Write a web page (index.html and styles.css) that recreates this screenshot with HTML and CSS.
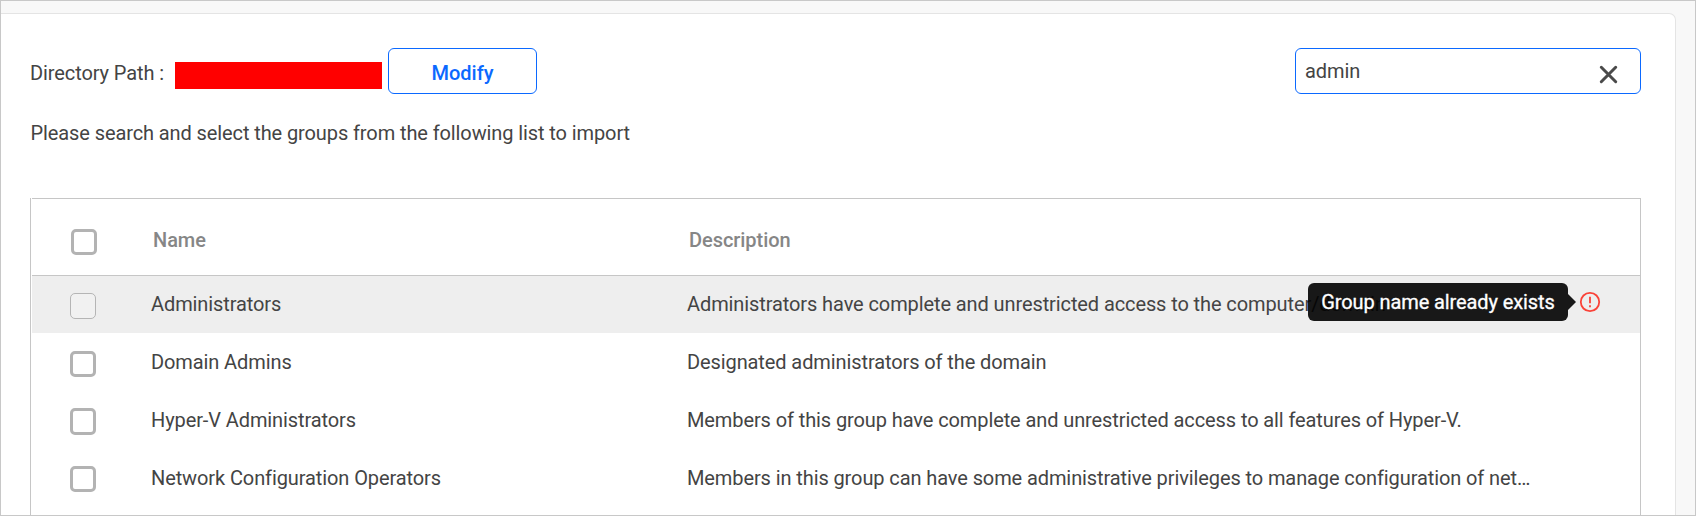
FILE: index.html
```html
<!DOCTYPE html>
<html lang="en">
<head>
<meta charset="utf-8">
<title>Import Groups</title>
<link rel="stylesheet" href="styles.css">
</head>
<body>
<main class="frame">
  <section class="panel">
    <div class="toolbar">
      <span class="path-label">Directory Path :</span>
      <span class="path-value"></span>
      <button class="modify" type="button">Modify</button>
      <div class="search">
        <span class="search-text">admin</span>
        <svg class="clear" width="19" height="19" viewBox="0 0 19 19"><path d="M2.3 2.3 16.7 16.7M16.7 2.3 2.3 16.7"/></svg>
      </div>
    </div>
    <p class="hint">Please search and select the groups from the following list to import</p>
    <div class="table">
      <div class="row head">
        <span class="box"></span><span class="name">Name</span><span class="desc">Description</span>
      </div>
      <div class="row disabled">
        <span class="box"></span><span class="name">Administrators</span><span class="desc">Administrators have complete and unrestricted access to the computer/domain</span>
        <div class="warn">
          <svg width="22" height="22" viewBox="0 0 22 22"><circle cx="11" cy="11" r="9.2"/><path d="M11 5.7V12.2M11 14.3V16.3"/></svg>
          <span class="tooltip">Group name already exists</span>
        </div>
      </div>
      <div class="row">
        <span class="box"></span><span class="name">Domain Admins</span><span class="desc">Designated administrators of the domain</span>
      </div>
      <div class="row low">
        <span class="box tall"></span><span class="name">Hyper-V Administrators</span><span class="desc">Members of this group have complete and unrestricted access to all features of Hyper-V.</span>
      </div>
      <div class="row low">
        <span class="box"></span><span class="name">Network Configuration Operators</span><span class="desc">Members in this group can have some administrative privileges to manage configuration of net…</span>
      </div>
    </div>
  </section>
</main>
</body>
</html>
```
FILE: styles.css
```css
* { box-sizing: border-box; }
body {
  margin: 0;
  font-family: Roboto, "Liberation Sans", sans-serif;
  font-size: 20px;
  line-height: 24px;
  letter-spacing: -.1px;
  color: #444;
}
.frame {
  height: 516px;
  border: 1px solid #c8c8c8;
  background: #f8f8f8;
  padding: 12px 19px 0 0;
  overflow: hidden;
}
.panel {
  height: 520px;
  background: #fff;
  border: 1px solid #e4e4e4;
  border-left: 0;
  border-radius: 0 7px 0 0;
  padding: 34px 34px 0 29px;
}
.toolbar { display: flex; height: 47px; }
.path-label { width: 145px; padding-top: 13px; white-space: nowrap; }
.path-value { width: 207px; height: 27px; margin-top: 14px; background: #f00; }
.modify {
  width: 149px;
  height: 46px;
  margin-left: 6px;
  padding: 4px 0 0;
  border: 1px solid #0b69ff;
  border-radius: 6px;
  background: #fff;
  color: #0b69ff;
  font: 500 20px/24px Roboto, sans-serif;
}
.search {
  display: flex;
  justify-content: space-between;
  width: 346px;
  height: 46px;
  margin-left: auto;
  padding: 10px 22px 0 9px;
  border: 1px solid #0b69ff;
  border-radius: 6px;
}
.clear { margin-top: 6px; fill: none; stroke: #4a4a4a; stroke-width: 3; stroke-linecap: round; }
.hint { margin: 26px 0 53px; padding-left: .5px; }
.table {
  height: 330px;
  border: solid #c6c6c6;
  border-width: 0 1px;
  padding-left: 1px;
}
.row { display: flex; height: 58px; padding: 18px 0 0 38px; position: relative; white-space: nowrap; }
.head { height: 78px; padding: 30px 0 0 39px; border: solid #c6c6c6; border-width: 1px 0; color: #868686; font-weight: 500; letter-spacing: -.05px; }
.head .name { margin-left: 56px; }
.box { width: 26px; height: 26px; border: 3px solid #b3b3b3; border-radius: 5px; }
.tall { height: 27px; }
.low .box { margin-top: -1px; }
.disabled { background: #eee; height: 57px; padding-top: 17px; }
.disabled .box { border: 1px solid #b5b5b5; background: #f1f1f1; }
.name { width: 536px; margin-left: 55px; }
.row .name, .row .desc { transform: translateY(-1px); }
.warn { margin-left: auto; position: absolute; right: 39px; top: 15px; display: flex; }
.warn svg { fill: none; stroke: #fa4238; stroke-width: 1.8; }
.tooltip {
  position: absolute;
  right: 33px;
  top: -8px;
  width: 260px;
  height: 38px;
  border-radius: 6px;
  background: rgba(0, 0, 0, .9);
  color: #fff;
  text-align: center;
  line-height: 38px;
  -webkit-text-stroke: .3px #fff;
}
.tooltip::after {
  content: "";
  position: absolute;
  left: 100%;
  top: 11px;
  border: 8px solid transparent;
  border-left-color: rgba(0, 0, 0, .9);
  border-right: 0;
}
```
